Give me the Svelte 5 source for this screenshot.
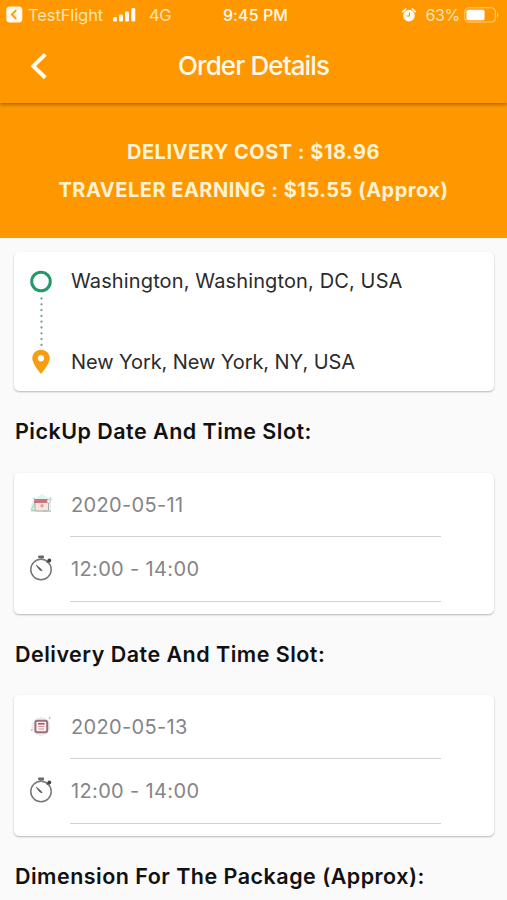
<script>
  const deliveryCost = '$18.96';
  const travelerEarning = '$15.55';

  const origin = 'Washington, Washington, DC, USA';
  const destination = 'New York, New York, NY, USA';

  const slots = [
    { kind: 'pickup', title: 'PickUp Date And Time Slot:', date: '2020-05-11', time: '12:00 - 14:00' },
    { kind: 'delivery', title: 'Delivery Date And Time Slot:', date: '2020-05-13', time: '12:00 - 14:00' }
  ];
</script>

<div class="screen">
  <header class="top">
    <div class="status">
      <div class="status-left">
        <svg width="17" height="17" viewBox="0 0 17 17">
          <rect x="0.3" y="0.5" width="16" height="16" rx="3.5" fill="#fffaf0" />
          <path d="M10.2 4.2L5.8 8.5l4.4 4.3" fill="none" stroke="#ff9800" stroke-width="1.8" />
        </svg>
        <span class="app-name">TestFlight</span>
        <svg class="signal" width="23" height="14" viewBox="0 0 23 14" fill="#fffaf0">
          <rect x="0" y="9" width="4" height="4.5" rx="1.2" />
          <rect x="6" y="6.5" width="4" height="7" rx="1.2" />
          <rect x="12" y="3.5" width="4" height="10" rx="1.2" />
          <rect x="18.3" y="0" width="4" height="13.5" rx="1.2" />
        </svg>
        <span class="network">4G</span>
      </div>
      <div class="clock">9:45 PM</div>
      <div class="status-right">
        <svg width="14" height="14" viewBox="0 0 14 14">
          <circle cx="7" cy="7.6" r="5.8" fill="#fffaf0" />
          <path d="M0.9 3.6L3.7 1M13.1 3.6L10.3 1" stroke="#fffaf0" stroke-width="1.7" stroke-linecap="round" />
          <path d="M7.4 4.4v3.6H4.6" fill="none" stroke="#ff9800" stroke-width="1.2" />
        </svg>
        <span class="percent">63%</span>
        <svg width="36" height="16" viewBox="0 0 36 16">
          <rect x="0.8" y="0.8" width="30.5" height="14.2" rx="3.5" fill="none" stroke="#ffcf82" stroke-width="1" />
          <rect x="2.5" y="2.7" width="18" height="10.5" rx="1.5" fill="#fff" />
          <path d="M33 5.3c1.9 1 1.9 4.4 0 5.4z" fill="#ffcf82" />
        </svg>
      </div>
    </div>
    <div class="app-bar">
      <svg class="back" width="20" height="28" viewBox="0 0 20 28">
        <path d="M16.3 2.3L4.3 14.2l12 11.5" fill="none" stroke="#fffaf0" stroke-width="4" />
      </svg>
      <h1>Order Details</h1>
    </div>
  </header>

  <section class="summary">
    <p>DELIVERY COST : {deliveryCost}</p>
    <p>TRAVELER EARNING : {travelerEarning} (Approx)</p>
  </section>

  <main>
    <div class="card route">
      <svg class="track" width="26" height="112" viewBox="0 0 26 112">
        <circle cx="13" cy="13.5" r="9.3" fill="#fff" stroke="#26996b" stroke-width="3" />
        <path d="M13.5 30.5V79" stroke="#6f9f9b" stroke-width="2.3" stroke-linecap="round" stroke-dasharray="0 5.8" />
        <path d="M13 81.7c-5 0-8.7 3.8-8.7 8.6 0 5.9 8.7 15.6 8.7 15.6s8.7-9.7 8.7-15.6c0-4.8-3.7-8.6-8.7-8.6z" fill="#f59e13" />
        <circle cx="13" cy="90.3" r="3.1" fill="#fff" />
      </svg>
      <div class="places">
        <span class="origin">{origin}</span>
        <span class="destination">{destination}</span>
      </div>
    </div>

    {#each slots as slot}
      <h2>{slot.title}</h2>
      <div class="card slot">
        <div class="row">
          {#if slot.kind === 'pickup'}
            <svg class="icon" width="26" height="28" viewBox="0 0 26 28">
              <path d="M2 19l2-7 5-5 5-3 5 3 4 2v10l-5 3H7z" fill="#dff5ed" />
              <path d="M3.5 19.5l3-6M22 7l1.5 3M5 9l2-1" stroke="#a9d8c8" stroke-width="1.2" />
              <rect x="7" y="9.5" width="13.5" height="11.5" rx="1" fill="#f8e5df" stroke="#a5979a" stroke-width="0.8" />
              <path d="M6.3 9h12.5l2 4H6z" fill="#cb7480" />
              <circle cx="14" cy="15.8" r="1.7" fill="#d9a4a0" />
              <path d="M3 20.5h5M15 21h8" stroke="#a8c9bd" stroke-width="1.4" />
              <circle cx="20.7" cy="11.3" r="1.7" fill="#fff" stroke="#bda5a3" stroke-width="0.6" />
            </svg>
          {:else}
            <svg class="icon" width="26" height="28" viewBox="0 0 26 28">
              <circle cx="13" cy="14.5" r="9.6" fill="#ececf3" />
              <rect x="7.4" y="8.7" width="11.8" height="11.6" rx="2" fill="#fff0ee" stroke="#96717d" stroke-width="2" />
              <path d="M10 11.8h6.6" stroke="#a35f70" stroke-width="1.7" />
              <path d="M10.2 14.5h6.2M10.6 17h5.4" stroke="#cf9698" stroke-width="1.2" />
              <path d="M21.6 4.7v2.2M3.7 17v2" stroke="#c4cc91" stroke-width="1.5" />
            </svg>
          {/if}
          <span class="value">{slot.date}</span>
        </div>
        <div class="row">
          <svg class="icon" width="26" height="28" viewBox="0 0 26 28">
            <circle cx="13" cy="15.5" r="10.2" fill="#fff" stroke="#777" stroke-width="1.5" />
            <rect x="10.2" y="1.5" width="5.8" height="2.7" rx="0.8" fill="#666" />
            <path d="M11.7 3.8h3v1.8h-3z" fill="#888" />
            <path d="M18.9 8.6l2-2" stroke="#555" stroke-width="1.6" />
            <circle cx="21.3" cy="6.5" r="1.9" fill="#444" />
            <path d="M8.2 11.2l4.4 3.5 1.5 2.2-2.5-1.2z" fill="#555" stroke="#555" stroke-width="0.8" />
          </svg>
          <span class="value">{slot.time}</span>
        </div>
      </div>
    {/each}

    <h2>Dimension For The Package (Approx):</h2>
  </main>
</div>

<style>
  :global(body) {
    background: #fafafa;
    overflow: hidden;
  }
  .screen {
    height: 900px;
    overflow: hidden;
    background: #fafafa;
    font-family: Inter, "Liberation Sans", sans-serif;
    color: #2b2b2b;
  }

  /* Status bar and app bar */
  .top {
    position: relative;
    height: 103px;
    background: #ff9800;
    color: #fffaf0;
    box-shadow: 0 1px 4px rgba(0, 0, 0, 0.45);
  }
  .status {
    display: grid;
    grid-template-columns: 1fr auto 1fr;
    align-items: center;
    height: 29px;
    padding: 0 7px 0 6px;
    font-size: 16.5px;
    line-height: 20px;
    white-space: nowrap;
  }
  .status-left,
  .status-right {
    display: flex;
    align-items: center;
    color: #ffe4b4;
  }
  .status-right {
    justify-content: flex-end;
  }
  .app-name {
    width: 74px;
    margin-left: 5px;
    letter-spacing: -0.1px;
  }
  .signal {
    margin-left: 11px;
  }
  .network {
    margin-left: 13px;
    letter-spacing: -0.4px;
  }
  .clock {
    padding-left: 5px;
    font-size: 16px;
    font-weight: 500;
    letter-spacing: 0.1px;
  }
  .percent {
    margin: 0 4px 0 9px;
    font-size: 16px;
    letter-spacing: -0.3px;
  }
  .app-bar {
    display: grid;
    grid-template-columns: 60px 1fr 60px;
    align-items: center;
    height: 73px;
  }
  .back {
    margin-left: 29px;
  }
  h1 {
    margin: 0;
    font-size: 26px;
    line-height: 32px;
    font-weight: 500;
    text-align: center;
    letter-spacing: -0.9px;
  }

  /* Cost banner */
  .summary {
    height: 104px;
    padding-top: 31px;
    background: #ff9800;
    color: #fff3d6;
    text-align: center;
    font-size: 20px;
    font-weight: 700;
    letter-spacing: 0.5px;
  }
  .summary p {
    margin: 0;
    line-height: 37.5px;
    white-space: nowrap;
  }

  main {
    padding: 14px 13px 0 14px;
  }
  .card {
    box-sizing: border-box;
    background: #fff;
    border-radius: 5px;
    box-shadow: 0 1px 2px rgba(0, 0, 0, 0.28);
  }
  .route {
    display: flex;
    height: 139px;
    padding: 15.5px 14px 0;
  }
  .places {
    display: flex;
    flex-direction: column;
    margin-left: 17px;
    font-size: 20px;
    white-space: nowrap;
  }
  .places span {
    flex: none;
    line-height: 27px;
  }
  .origin {
    height: 81px;
    letter-spacing: 0.13px;
  }
  .destination {
    letter-spacing: -0.08px;
  }

  h2 {
    margin: 0 0 0 1px;
    height: 81.5px;
    line-height: 80px;
    font-size: 21.5px;
    font-weight: 600;
    color: #111;
    letter-spacing: 0.48px;
    white-space: nowrap;
  }
  .slot {
    height: 141px;
    padding: 0 53px 0 14px;
  }
  .row {
    display: flex;
    align-items: stretch;
    height: 64px;
  }
  .row + .row {
    height: 65px;
  }
  .icon {
    margin-top: 17px;
  }
  .value {
    box-sizing: border-box;
    flex: 1;
    margin-left: 16px;
    padding: 1px 0 0 1px;
    border-bottom: 1px solid #d2d2d2;
    font-size: 20px;
    line-height: 62px;
    letter-spacing: 0.35px;
    color: #858585;
  }
  .row + .row .value {
    line-height: 63px;
  }
</style>
